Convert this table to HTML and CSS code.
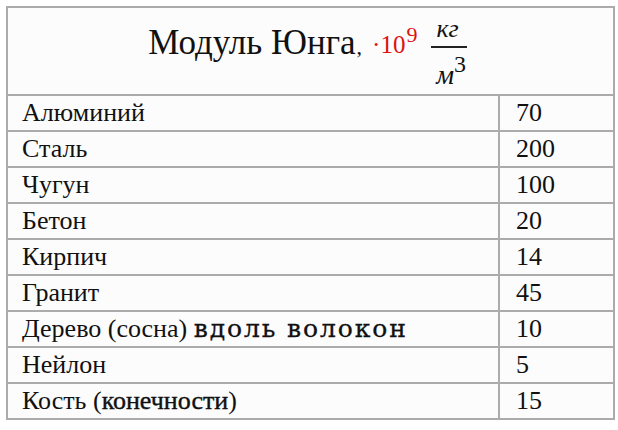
FILE: index.html
```html
<!DOCTYPE html>
<html>
<head>
<meta charset="utf-8">
<link rel="stylesheet" href="styles.css">
</head>
<body>
<table class="tbl">
  <colgroup>
    <col class="c1">
    <col class="c2">
  </colgroup>
  <tr class="head">
    <th colspan="2">
      <div class="headline">
        <span class="title">Модуль Юнга<span class="comma">,</span></span>
        <span class="mult">·10<sup>9</sup></span>
        <span class="frac"><span class="num">кг</span><span class="den">м<sup>3</sup></span></span>
      </div>
    </th>
  </tr>
  <tr><td class="name">Алюминий</td><td class="val">70</td></tr>
  <tr><td class="name">Сталь</td><td class="val">200</td></tr>
  <tr><td class="name">Чугун</td><td class="val">100</td></tr>
  <tr><td class="name">Бетон</td><td class="val">20</td></tr>
  <tr><td class="name">Кирпич</td><td class="val">14</td></tr>
  <tr><td class="name">Гранит</td><td class="val">45</td></tr>
  <tr><td class="name">Дерево (сосна) <span class="wide">вдоль волокон</span></td><td class="val">10</td></tr>
  <tr><td class="name">Нейлон</td><td class="val">5</td></tr>
  <tr><td class="name">Кость (<span class="dark">конечности</span>)</td><td class="val">15</td></tr>
</table>
</body>
</html>
```
FILE: styles.css
```css
html, body {
  margin: 0;
  padding: 0;
  background: #ffffff;
}
body {
  padding: 6px 0 0 6px;
  font-family: "Liberation Serif", "Times New Roman", serif;
  color: #111;
}
.tbl {
  border-collapse: collapse;
  width: 607px;
  table-layout: fixed;
  background: #fcfcfc;
  font-family: "Liberation Serif", "Times New Roman", serif;
}
.c1 { width: 492px; }
.c2 { width: 115px; }
.tbl th, .tbl td {
  border: 2px solid #ababab;
  padding: 0;
}
.tbl .head th {
  height: 86px;
  font-weight: normal;
  vertical-align: top;
}
.headline {
  display: flex;
  justify-content: center;
  align-items: flex-start;
  white-space: nowrap;
  padding-right: 6px;
}
.title {
  font-size: 35px;
  line-height: 40px;
  margin-top: 15px;
  color: #111;
}
.comma {
  font-size: 22px;
  margin-left: 1px;
}
.mult {
  color: #dd1111;
  font-size: 25px;
  line-height: 30px;
  margin-top: 22px;
  margin-left: 10px;
}
.mult sup {
  font-size: 22px;
  vertical-align: 11px;
  line-height: 0;
  margin-left: 1px;
}
.frac {
  display: flex;
  flex-direction: column;
  align-items: center;
  margin-top: 8px;
  margin-left: 14px;
  font-style: italic;
  font-size: 26px;
  color: #111;
}
.num {
  border-bottom: 2px solid #222;
  padding: 0 8px 4px 5px;
  line-height: 26px;
}
.den {
  padding-top: 14px;
  line-height: 26px;
  font-size: 28px;
  padding-left: 4px;
}
.den sup {
  font-style: normal;
  font-size: 24px;
  vertical-align: 12px;
  line-height: 0;
  margin-left: 0;
}
.tbl .name, .tbl .val {
  height: 34px;
  font-size: 26px;
  line-height: 30px;
  white-space: nowrap;
}
.tbl .name {
  padding-left: 14px;
}
.tbl .val {
  padding-left: 16px;
}
.wide {
  font-family: "DejaVu Serif", "Liberation Serif", serif;
  font-size: 25px;
  letter-spacing: 1.9px;
  -webkit-text-stroke: 0.3px #111;
}
.dark {
  -webkit-text-stroke: 0.4px #111;
}
```
